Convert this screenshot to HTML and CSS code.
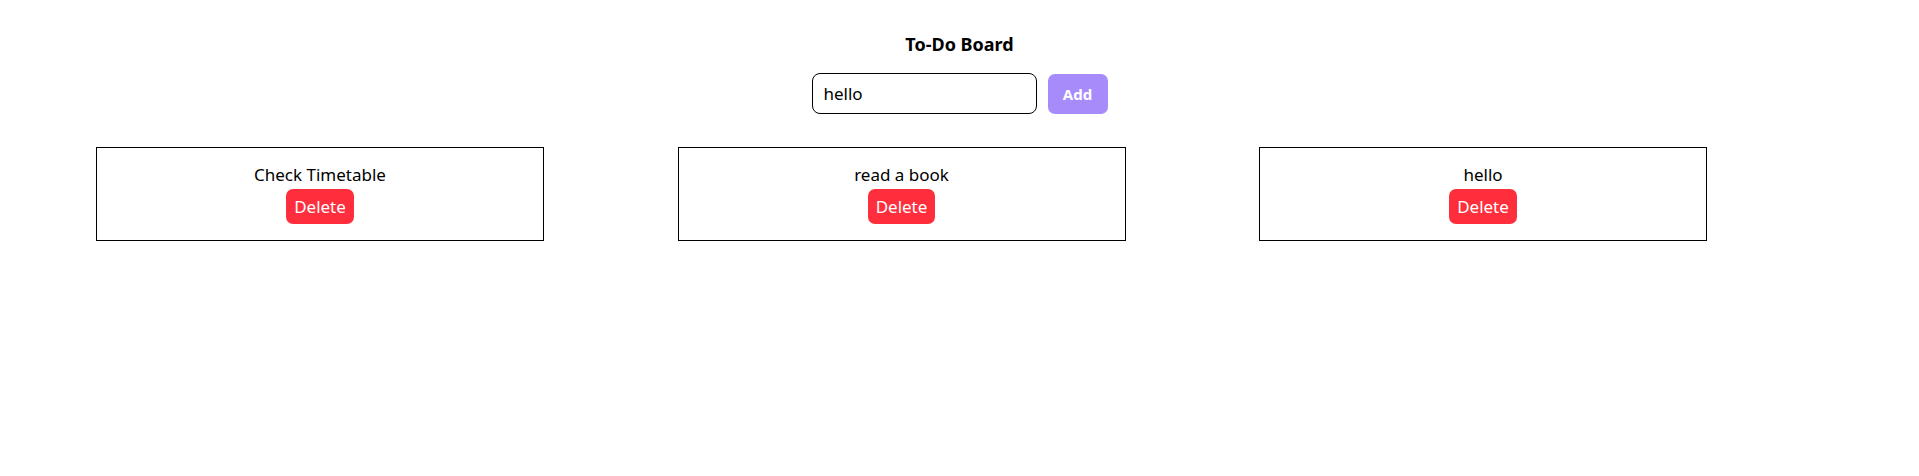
FILE: index.html
```html
<!DOCTYPE html>
<html lang="en">
<head>
<meta charset="utf-8">
<title>To-Do Board</title>
<link rel="stylesheet" href="styles.css">
</head>
<body>
<div class="app">
  <h1 class="title">To-Do Board</h1>
  <div class="form">
    <input class="task-input" type="text" value="hello">
    <button class="add-btn">Add</button>
  </div>
  <div class="board">
    <div class="card">
      <div class="card-text">Check Timetable</div>
      <button class="delete-btn">Delete</button>
    </div>
    <div class="card">
      <div class="card-text">read a book</div>
      <button class="delete-btn">Delete</button>
    </div>
    <div class="card">
      <div class="card-text">hello</div>
      <button class="delete-btn">Delete</button>
    </div>
  </div>
</div>
</body>
</html>
```
FILE: styles.css
```css
* { box-sizing: border-box; }
html, body {
  margin: 0;
  padding: 0;
  background: #fff;
}
body {
  font-family: "Noto Sans", "Open Sans", sans-serif;
  color: #000;
}
.app {
  display: flex;
  flex-direction: column;
  align-items: center;
  padding-top: 32px;
}
.title {
  margin: 0;
  font-size: 18px;
  font-weight: 700;
  line-height: 24px;
}
.form {
  display: flex;
  align-items: center;
  gap: 11px;
  margin-top: 17px;
}
.task-input {
  width: 225px;
  height: 41px;
  border: 1px solid #000;
  border-radius: 8px;
  padding: 0 11px;
  font-family: inherit;
  font-size: 17px;
  color: #000;
  outline: none;
}
.add-btn {
  width: 60px;
  height: 40px;
  border: none;
  border-radius: 7px;
  background: #a78bfa;
  color: #fff;
  font-family: inherit;
  font-weight: 700;
  font-size: 15px;
  padding: 0;
}
.board {
  align-self: stretch;
  display: flex;
  gap: 133.5px;
  padding-left: 96px;
  margin-top: 33px;
}
.card {
  width: 448px;
  height: 94px;
  border: 1px solid #000;
  display: flex;
  flex-direction: column;
  align-items: center;
  padding-top: 15px;
}
.card-text {
  font-size: 17px;
  line-height: 24px;
}
.delete-btn {
  margin-top: 2px;
  height: 35px;
  padding: 0 8px;
  border: none;
  border-radius: 7px;
  background: #ff2e3c;
  color: #fff;
  font-family: inherit;
  font-size: 17px;
}
```
